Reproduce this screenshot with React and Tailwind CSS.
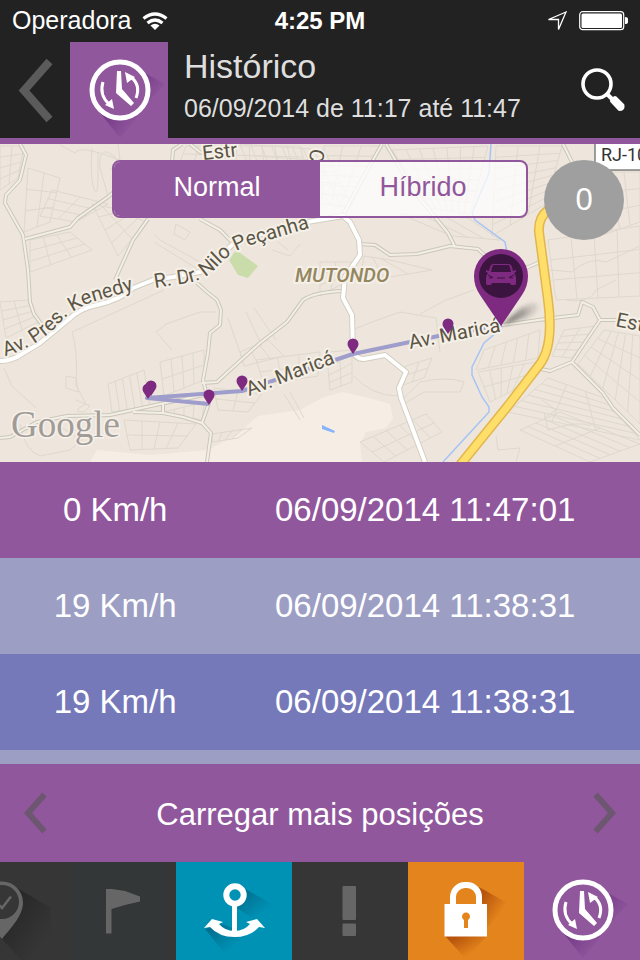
import { useState } from "react";

const positions = [
  { id: 1, speed: "0 Km/h", date: "06/09/2014 11:47:01", bg: "bg-[#91579d]" },
  { id: 2, speed: "19 Km/h", date: "06/09/2014 11:38:31", bg: "bg-[#9c9ec4]" },
  { id: 3, speed: "19 Km/h", date: "06/09/2014 11:38:31", bg: "bg-[#7579ba]" },
];

// City blocks: four corners plus the number of rows and columns
const blocks = [
  [[0, 146], [24, 146], [18, 178], [0, 190], 4, 2],
  [[28, 168], [60, 178], [50, 222], [24, 232], 3, 2],
  [[52, 190], [108, 204], [76, 222], [40, 216], 3, 2],
  [[30, 240], [70, 232], [92, 250], [30, 272], 3, 3],
  [[92, 204], [112, 208], [146, 222], [118, 256], 4, 2],
  [[186, 146], [300, 146], [306, 168], [180, 162], 2, 9],
  [[240, 144], [324, 150], [352, 206], [262, 200], 5, 8],
  [[324, 146], [380, 146], [350, 208], [322, 204], 6, 3],
  [[392, 150], [488, 146], [470, 214], [430, 208], 6, 7],
  [[496, 146], [562, 146], [546, 204], [492, 236], 8, 3],
  [[400, 214], [468, 218], [500, 240], [452, 236], 1, 3],
  [[364, 256], [390, 260], [432, 270], [360, 282], 1, 3],
  [[320, 262], [352, 262], [342, 284], [320, 296], 3, 2],
  [[576, 172], [640, 172], [640, 222], [600, 236], 3, 4],
  [[548, 240], [640, 226], [640, 296], [556, 300], 3, 4],
  [[564, 330], [596, 326], [572, 358], [552, 356], 4, 2],
  [[578, 364], [604, 330], [640, 336], [640, 424], 5, 4],
  [[508, 412], [548, 378], [604, 398], [640, 440], 3, 6],
  [[520, 430], [560, 412], [640, 444], [590, 462], 2, 5],
  [[484, 350], [540, 330], [538, 358], [476, 370], 1, 5],
  [[478, 372], [536, 362], [518, 388], [490, 402], 2, 5],
  [[360, 442], [426, 414], [442, 432], [384, 462], 2, 5],
  [[328, 368], [352, 354], [352, 382], [330, 390], 3, 2],
  [[406, 366], [432, 358], [424, 378], [400, 386], 2, 2],
  [[108, 384], [144, 370], [150, 406], [112, 412], 1, 5],
  [[160, 362], [204, 350], [204, 380], [164, 396], 2, 4],
  [[124, 420], [196, 424], [178, 448], [130, 450], 2, 4],
  [[164, 412], [204, 402], [202, 420], [166, 414], 1, 4],
  [[0, 302], [28, 300], [38, 322], [6, 338], 4, 2],
  [[240, 352], [268, 340], [284, 356], [244, 366], 1, 3],
  [[214, 388], [262, 394], [248, 412], [218, 410], 2, 2],
  [[212, 434], [252, 428], [238, 438], [212, 442], 1, 4],
  [[256, 360], [320, 352], [318, 376], [264, 384], 2, 3],
];

const mix = (a, b, t) => [a[0] + (b[0] - a[0]) * t, a[1] + (b[1] - a[1]) * t];

const blockPath = ([a, b, c, d, rows, cols]) => {
  let path = "";
  for (let i = 0; i <= rows; i++) {
    path += `M${mix(a, d, i / rows)}L${mix(b, c, i / rows)}`;
  }
  for (let i = 0; i <= cols; i++) {
    path += `M${mix(a, b, i / cols)}L${mix(d, c, i / cols)}`;
  }
  return path;
};

const lanes = [
  "M118 144L120 160Q78 144 75 153L60 145M92 148Q90 170 93 186Q97 200 98 180V152M108 196L100 168Q98 150 108 152Q124 160 110 170",
  "M72 332L164 290M72 332Q78 350 76 385L86 404Q70 412 84 412L90 406L76 400M66 376L76 378L78 392L66 388Z",
  "M154 234L160 240L200 262M154 242L196 268M176 224L190 232L185 240L174 234Z",
  "M172 350L156 332L166 324L200 312L216 312M4 368L12 386L36 408M20 424Q24 450 40 456L70 450L82 440L62 428",
  "M272 250L290 256L300 244M278 242L288 250M246 312L262 346M228 318L242 358M254 308L276 340",
  "M352 350L330 352M352 330L372 322L400 312L436 318L440 352M420 314L446 300L474 290",
  "M354 376Q372 396 398 396M402 400L420 382Q448 376 464 382L460 392L424 392L404 404",
  "M550 270L572 272Q590 256 606 262L640 246M566 300Q590 304 596 290L616 280",
  "M542 400L556 410L544 418M544 412L548 430Q580 420 590 426M496 436L498 450L520 448L516 462",
  "M284 394L300 420M290 392L304 418",
];

const roads = [
  "M20 144L26 155L20 180L6 195L5 203L23 235L28 270L30 302L34 314L42 325",
  "M25 239L70 227L78 218L108 197L116 190",
  "M148 219L133 240L115 280",
  "M172 162L173 150L182 144",
  "M190 144L200 152L226 160",
  "M200 219L220 230L233 243",
  "M197 283L207 292L217 300L221 310L220 325L210 333L208 353L203 380L209 403L202 423L211 433L207 462",
  "M202 383L217 382L230 370L260 343L287 322L303 300Q315 292 343 291",
  "M0 438L10 437L37 422L67 416L110 415L160 404L209 394",
  "M133 412L163 413L183 417L202 423M163 404V413",
  "M382 144L360 183L343 215",
  "M386 144L413 190L448 233L455 247",
  "M359 244L375 245L390 255L417 254L450 246L478 249L490 260",
  "M526 268L540 262",
  "M563 144L574 166",
  "M502 325L553 318L578 315L582 302L593 307L600 320H618",
  "M600 320L572 362L550 371L541 369",
  "M572 362L603 393L613 408L640 435",
];

const avenue =
  "M0 361Q12 361 22 354L40 343L68 320Q80 308 97 305Q120 300 133 288L153 280L173 277L200 272L213 263L234 243Q270 230 307 222L343 216L350 222L359 240L360 255L345 277L343 298L352 315L353 350Q355 359 364 359L385 355L406 372L399 388L401 398L425 462";

const highway = "M575 180L548 210Q538 218 539 232L548 300Q554 345 540 364L507 407L456 470";

const PIN = "M0 0L-21-31C-25-37-27-43-27-50A27 27 0 0 1 27-50C27-43 25-37 21-31Z";

const smallPins = [[151, 396], [148, 399], [209, 405], [242, 391], [353, 354], [448, 334]];

function MapView() {
  return (
    <svg
      viewBox="0 144 640 318"
      preserveAspectRatio="xMidYMid slice"
      className="block h-[318px] w-full bg-[#eee6dd]"
      role="img"
      aria-label="Mapa"
    >
      <defs>
        <linearGradient id="pin-shadow" x1="0" x2="1">
          <stop offset="0" stopColor="#222" stopOpacity="0.75" />
          <stop offset="1" stopColor="#222" stopOpacity="0" />
        </linearGradient>
        <filter id="soft" x="-20%" y="-50%" width="140%" height="200%">
          <feGaussianBlur stdDeviation="2" />
        </filter>
        <path id="kenedy" d="M5 356Q34 348 56 327Q72 308 96 301L150 285" />
        <path id="nilo" d="M155 288L180 284Q203 282 216 268Q230 252 248 246L330 222" />
      </defs>

      <path
        fill="#f6eee4"
        d="M90 462L97 450L150 455L208 450L235 436L258 416L300 410L322 398L342 392L365 397L390 404L393 418L386 428L366 432L360 445L362 462Z"
      />
      <path fill="#cbdcab" d="M229 260L236 250L258 266L248 278L238 275Z" />
      <path fill="#87b4fa" d="M322 425L335 431L334 433L322 429Z" />

      <g fill="none" stroke="#dfd8cc" strokeWidth="1">
        {blocks.map((b, i) => (
          <path key={i} d={blockPath(b)} />
        ))}
        {lanes.map((d) => (
          <path key={d} d={d} />
        ))}
      </g>

      <path
        fill="none"
        stroke="#a5c4f4"
        strokeWidth="1.5"
        d="M491 144L489 173L472 213L475 220L505 242L507 252M496 333L484 343L472 367V375L482 397L489 407V412L443 462"
      />

      <g fill="none" strokeLinejoin="round">
        {roads.map((d) => (
          <path key={d} d={d} stroke="#cbc7b8" strokeWidth="4" />
        ))}
        {roads.map((d) => (
          <path key={d} d={d} stroke="#f3efe7" strokeWidth="2" />
        ))}
        <path d={avenue} stroke="#d3cec1" strokeWidth="6" />
        <path d={avenue} stroke="#fff" strokeWidth="4" />
        <path d={highway} stroke="#e2b64d" strokeWidth="10" />
        <path d={highway} stroke="#ffdf6a" strokeWidth="7" />
        <path
          d="M209 404L147 398L242 391L353 354L448 334L502 325"
          stroke="#9f9dcb"
          strokeWidth="4"
        />
      </g>

      <g
        fill="#5b5545"
        stroke="#f5f0e8"
        strokeWidth="4"
        strokeLinejoin="round"
        paintOrder="stroke"
        className="font-[Roboto,sans-serif] text-[20px]"
      >
        <text>
          <textPath href="#kenedy">Av. Pres. Kenedy</textPath>
        </text>
        <text>
          <textPath href="#nilo">R. Dr. Nilo Peçanha</textPath>
        </text>
        <text transform="translate(249 396) rotate(-21)">Av. Maricá</text>
        <text transform="translate(410 349) rotate(-11)">Av. Maricá</text>
        <text transform="translate(203 160) rotate(-6)">Estr</text>
        <text transform="translate(311 148) rotate(100)">C</text>
        <text transform="translate(615 326) rotate(12)">Est</text>
        <text x="295" y="282" fill="#94865f" className="font-medium italic">
          MUTONDO
        </text>
      </g>

      <rect x="595" y="130" width="60" height="40" fill="#fff" stroke="#444" />
      <text x="601" y="161" fill="#333" className="font-[Roboto,sans-serif] text-[18px]">
        RJ-10
      </text>

      <text
        x="11"
        y="437"
        fill="#a19c97"
        stroke="#f6f1ea"
        strokeWidth="3"
        paintOrder="stroke"
        className="font-['Liberation_Serif',serif] text-[37px]"
      >
        Google
      </text>

      {smallPins.map(([x, y]) => (
        <path
          key={x}
          d="M0 0L-4-6Q-5.500-8-5.500-10A5.500 5.500 0 0 1 5.500-10Q5.500-8 4-6Z"
          fill="#7d2a80"
          transform={`translate(${x} ${y})`}
        />
      ))}

      <path
        d="M502 325L520 309Q534 301 540 304Q542 309 530 316Z"
        fill="url(#pin-shadow)"
        filter="url(#soft)"
      />
      <path d={PIN} fill="#7d2a80" transform="translate(501 326)" />
      <circle cx="501" cy="276" r="22" fill="#3b143f" />
      <g transform="translate(501 275)" fill="#7d2a80">
        <path
          fillRule="evenodd"
          d="M-8-11H8Q10-11 11-8L12-4L15-5V-3L13-2Q15 0 15 3V8Q15 10 14 10H11Q9 10 9 8H-9Q-9 10-11 10H-14Q-15 10-15 8V3Q-15 0-13-2L-15-3V-5L-12-4L-11-8Q-10-11-8-11ZM-8-10Q-9-8-10-3H10Q9-8 8-10Z"
        />
        <path
          fill="none"
          stroke="#3b143f"
          strokeWidth="1"
          d="M-13 0L-8 2.500L-12 3M13 0L8 2.500L12 3M-4 3H4"
        />
      </g>
    </svg>
  );
}

function ClockIcon({ id }) {
  return (
    <svg viewBox="0 0 98 98" className="h-[98px] w-[98px] shrink-0" aria-hidden="true">
      <defs>
        <linearGradient id={id} x1="0.1" y1="0.1" x2="0.8" y2="0.7">
          <stop offset="0.1" stopColor="#5f2478" stopOpacity="0.8" />
          <stop offset="0.9" stopColor="#5f2478" stopOpacity="0" />
        </linearGradient>
      </defs>
      <path fill={`url(#${id})`} d="M73 30L95 42L76 62ZM31 72L50 96L68 74Z" />
      <circle cx="50" cy="48" r="28" fill="#91579d" stroke="#fff" strokeWidth="5" />
      <path fill="#fff" d="M47 29H51L52 47L64 61L61 64L46 51Z" />
      <path fill="none" stroke="#fff" strokeWidth="3" d="M33 40Q29 53 39 62M66 56Q71 43 61 35" />
      <path fill="#fff" d="M44 67L35 63L42 57ZM55 30L57 41L65 35Z" />
    </svg>
  );
}

function PinIcon() {
  return (
    <svg viewBox="0 0 98 98" className="h-[98px] w-[98px] shrink-0" aria-hidden="true">
      <defs>
        <linearGradient id="sh-pin" x1="0" y1="0" x2="0.9" y2="0.9">
          <stop offset="0.2" stopColor="#272727" />
          <stop offset="0.9" stopColor="#363636" />
        </linearGradient>
      </defs>
      <path fill="url(#sh-pin)" d="M64 26L98 46V98H68L49 77Z" />
      <path fill="#666" d="M49 77C41 67 28 54 28 40.500A21 21 0 0 1 70 40.500C70 54 57 67 49 77Z" />
      <circle cx="49" cy="40" r="17" fill="#363636" />
      <path fill="none" stroke="#666" strokeWidth="2.500" d="M42 39L49 46L58 34.500" />
    </svg>
  );
}

function FlagIcon() {
  return (
    <svg viewBox="0 0 98 98" className="h-[98px] w-[98px] shrink-0 bg-[#333737]" aria-hidden="true">
      <path fill="#666" d="M37 27H43L56 29L71 34.500V39.500L56 43L42.500 47V71.500H37Z" />
    </svg>
  );
}

function AnchorIcon() {
  return (
    <svg viewBox="0 0 98 98" className="h-[98px] w-[98px] shrink-0" aria-hidden="true">
      <defs>
        <linearGradient id="sh-anchor" x1="0.1" y1="0.1" x2="0.8" y2="0.7">
          <stop offset="0" stopColor="#035e7d" stopOpacity="0.7" />
          <stop offset="0.9" stopColor="#035e7d" stopOpacity="0" />
        </linearGradient>
      </defs>
      <path fill="url(#sh-anchor)" d="M60 27L95 46L70 58L52 46Z" />
      <path fill="url(#sh-anchor)" d="M20 67L41 93L66 72L36 62Z" />
      <circle cx="50" cy="33" r="8.700" fill="#0092b5" stroke="#fff" strokeWidth="6" />
      <path fill="#fff" d="M47 43H52V70H47Z" />
      <path
        fill="#fff"
        d="M19 66L27 57L38 60L34 62Q40 69 49.500 69Q59 69 65 62L61 60L72 57L80 66L74 65Q65 75 49.500 75Q34 75 25 65Z"
      />
    </svg>
  );
}

function AlertIcon() {
  return (
    <svg viewBox="0 0 98 98" className="h-[98px] w-[98px] shrink-0" aria-hidden="true">
      <rect x="41.500" y="24" width="13.500" height="34" rx="1" fill="#666" />
      <rect x="41.500" y="61.500" width="13.500" height="12.500" rx="1" fill="#666" />
    </svg>
  );
}

function LockIcon() {
  return (
    <svg viewBox="0 0 98 98" className="h-[98px] w-[98px] shrink-0" aria-hidden="true">
      <defs>
        <linearGradient id="sh-lock" x1="0.1" y1="0.1" x2="0.8" y2="0.7">
          <stop offset="0.1" stopColor="#b24f0c" stopOpacity="0.9" />
          <stop offset="0.9" stopColor="#b24f0c" stopOpacity="0" />
        </linearGradient>
      </defs>
      <path fill="url(#sh-lock)" d="M62 25L92 42L70 66Z" />
      <path fill="url(#sh-lock)" d="M28 74L49 97L70 74Z" />
      <path fill="none" stroke="#fff" strokeWidth="6" d="M36 43V35A12 12 0 0 1 48 23H50A12 12 0 0 1 62 35V43" />
      <path fill="#fff" d="M27.500 42H70V74.500H27.500Z" />
      <path fill="#e3851c" d="M47 58A4 4 0 1 1 51 58V66H47Z" />
    </svg>
  );
}

const tabs = [
  { name: "Posição", bg: "bg-[#363636]", icon: <PinIcon /> },
  { name: "Cerca", bg: "bg-[#363636]", icon: <FlagIcon /> },
  { name: "Âncora", bg: "bg-[#0092b5]", icon: <AnchorIcon /> },
  { name: "Alertas", bg: "bg-[#363636]", icon: <AlertIcon /> },
  { name: "Bloqueio", bg: "bg-[#e3851c]", icon: <LockIcon /> },
  { name: "Histórico", bg: "bg-[#91579d]", icon: <ClockIcon id="sh-tab" /> },
];

function StatusBar() {
  return (
    <div className="grid h-[42px] grid-cols-3 items-center px-3 text-white">
      <div className="flex items-center gap-2.5 text-[25px]">
        Operadora
        <svg viewBox="0 0 26 18" className="h-[18px] w-[26px]" aria-hidden="true">
          <path fill="none" stroke="#fff" strokeWidth="3.200" d="M1.500 6.500Q13-2.500 24.500 6.500M5.500 11Q13 5 20.500 11" />
          <path fill="#fff" d="M8.500 13.500Q13 10 17.500 13.500L13 18Z" />
        </svg>
      </div>
      <div className="text-center text-[24px] font-bold">4:25 PM</div>
      <div className="flex items-center justify-end gap-3">
        <svg viewBox="0 0 20 20" className="h-5 w-5" aria-hidden="true">
          <path fill="none" stroke="#fff" strokeWidth="1.300" d="M19 1L1.500 8.500H11.500V18.500Z" />
        </svg>
        <svg viewBox="0 0 49 20" className="h-5 w-[49px]" aria-hidden="true">
          <rect x="0.700" y="0.700" width="44" height="18" rx="3" fill="none" stroke="#fff" strokeWidth="1.200" />
          <rect x="2.500" y="2.500" width="40.500" height="14.500" rx="1.500" fill="#fff" />
          <path fill="#fff" d="M46 6Q49 6 49 8V11Q49 13 46 13Z" />
        </svg>
      </div>
    </div>
  );
}

export default function App() {
  const [mode, setMode] = useState("normal");

  return (
    <div className="flex min-h-screen flex-col bg-[#222222] font-['Liberation_Sans',Arial,sans-serif]">
      <StatusBar />

      <header className="flex border-b-[6px] border-[#91579d]">
        <button type="button" aria-label="Voltar" className="w-[70px] shrink-0">
          <svg viewBox="0 0 70 96" className="h-24 w-[70px]" aria-hidden="true">
            <path fill="none" stroke="#5b5b5b" strokeWidth="8" d="M49.500 19.500L24 48.500L49.500 77.500" />
          </svg>
        </button>
        <div className="h-24 w-[98px] shrink-0 overflow-hidden bg-[#91579d]">
          <ClockIcon id="sh-header" />
        </div>
        <div className="min-w-0 flex-1 pl-4 text-[#dedede]">
          <h1 className="text-[34px] leading-[48px]">Histórico</h1>
          <p className="text-[25px] leading-[36px] whitespace-nowrap">06/09/2014 de 11:17 até 11:47</p>
        </div>
        <button type="button" aria-label="Buscar" className="shrink-0 pr-3">
          <svg viewBox="0 0 48 48" className="h-12 w-12" aria-hidden="true">
            <circle cx="17" cy="18" r="14" fill="none" stroke="#fff" strokeWidth="3.600" />
            <path stroke="#fff" strokeWidth="4" d="M26 27L33 34" />
            <path stroke="#fff" strokeWidth="4" strokeLinejoin="round" fill="#fff" d="M35 32L42.500 39.500Q43 43 39.500 43L32 35Z" />
          </svg>
        </button>
      </header>

      <section className="relative">
        <MapView />
        <div className="absolute inset-x-28 top-4 flex h-[58px] overflow-hidden rounded-lg border-2 border-[#91579d] bg-white/75 text-[27px]">
          <button
            type="button"
            aria-pressed={mode === "normal"}
            onClick={() => setMode("normal")}
            className={`flex-1 pb-1 ${mode === "normal" ? "bg-[#91579d] text-white" : "text-[#91579d]"}`}
          >
            Normal
          </button>
          <button
            type="button"
            aria-pressed={mode === "hibrido"}
            onClick={() => setMode("hibrido")}
            className={`flex-1 pb-1 ${mode === "hibrido" ? "bg-[#91579d] text-white" : "text-[#91579d]"}`}
          >
            Híbrido
          </button>
        </div>
        <div className="absolute top-4 right-4 flex h-20 w-20 items-center justify-center rounded-full bg-[#9f9f9f] text-[31px] text-white">
          0
        </div>
      </section>

      <div className="flex-1 bg-[#9c9ec4]">
        <table className="w-full table-fixed text-center text-[33px] text-white">
          <tbody>
            {positions.map((p) => (
              <tr key={p.id} className={`h-24 ${p.bg}`}>
                <td className="w-[36%] p-0">{p.speed}</td>
                <td className="p-0 pr-5">{p.date}</td>
              </tr>
            ))}
          </tbody>
        </table>
      </div>

      <div className="flex h-[98px] items-center justify-between bg-[#91579d] px-5">
        <button type="button" aria-label="Anterior">
          <svg viewBox="0 0 32 48" className="h-12 w-8" aria-hidden="true">
            <path fill="none" stroke="#6d5670" strokeWidth="6" d="M24.500 5.500L8 24L24.500 42.500" />
          </svg>
        </button>
        <button type="button" className="pt-1 text-[31px] text-white">
          Carregar mais posições
        </button>
        <button type="button" aria-label="Próximo">
          <svg viewBox="0 0 32 48" className="h-12 w-8" aria-hidden="true">
            <path fill="none" stroke="#6d5670" strokeWidth="6" d="M7.500 5.500L24 24L7.500 42.500" />
          </svg>
        </button>
      </div>

      <nav className="flex h-[98px] justify-end overflow-hidden bg-[#363636]">
        {tabs.map((t) => (
          <button
            key={t.name}
            type="button"
            aria-label={t.name}
            className={`flex w-[116px] shrink-0 items-center justify-center ${t.bg}`}
          >
            {t.icon}
          </button>
        ))}
      </nav>
    </div>
  );
}
